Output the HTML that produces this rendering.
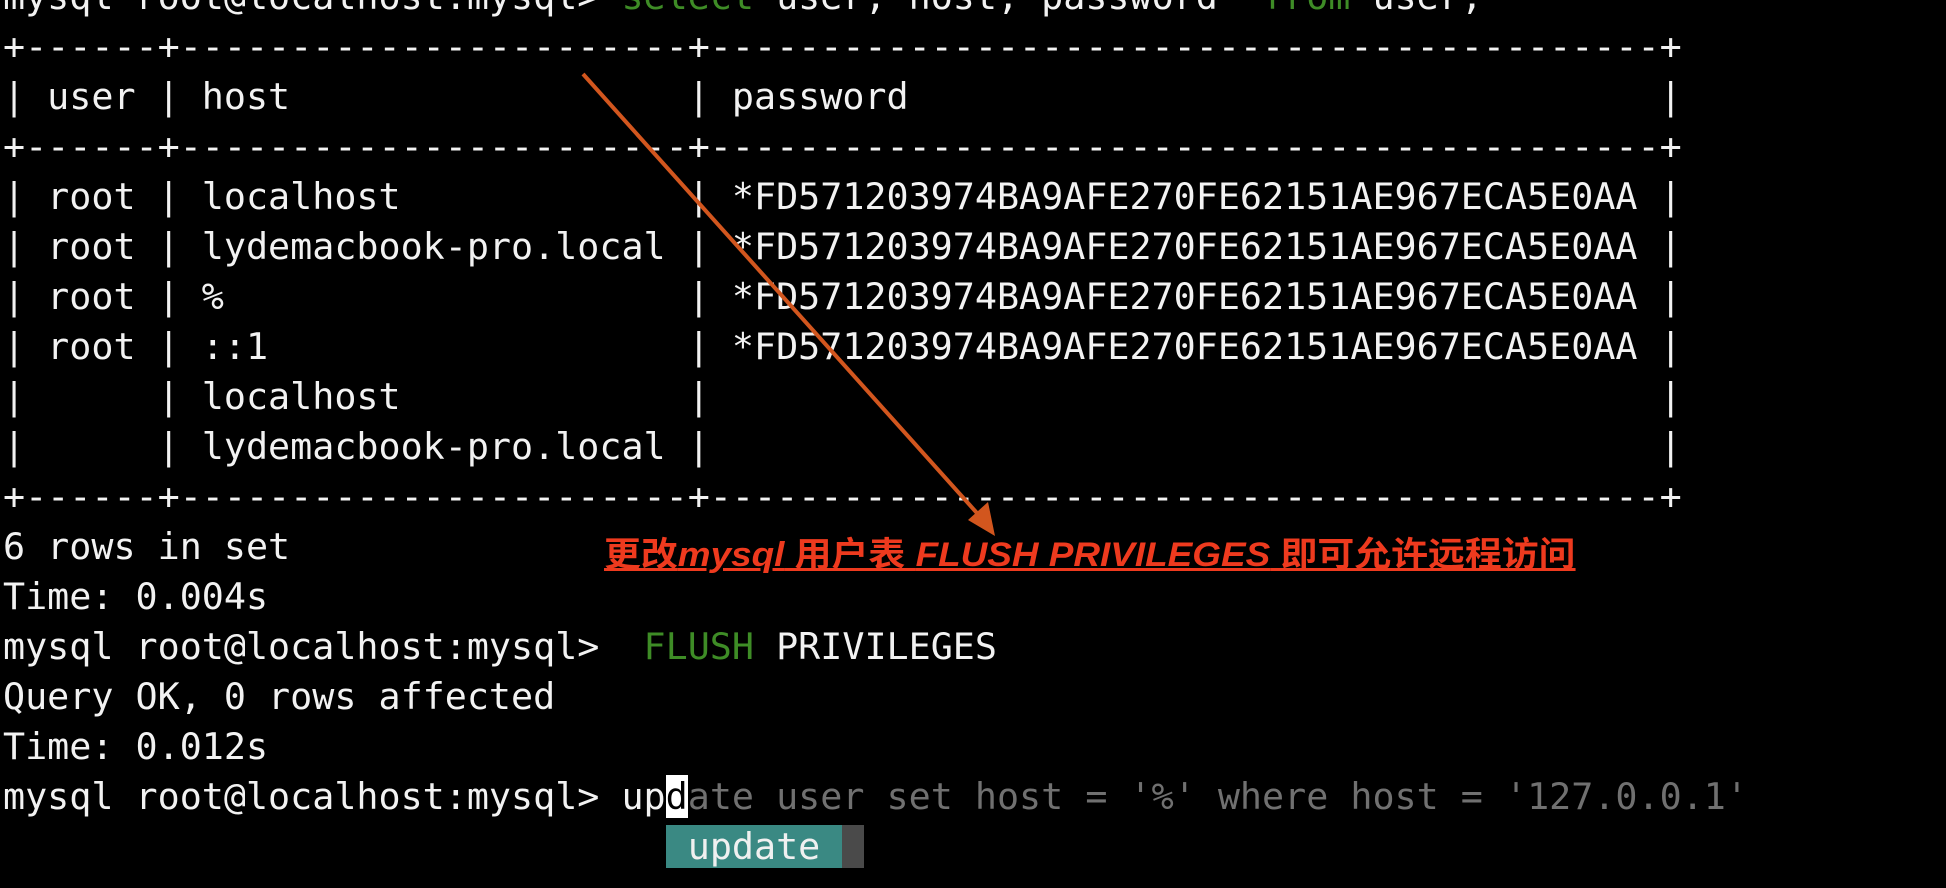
<!DOCTYPE html>
<html><head><meta charset="utf-8"><style>
html,body{margin:0;padding:0;background:#000;width:1946px;height:888px;overflow:hidden}
pre{position:absolute;left:3px;top:-28px;margin:0;font-family:"DejaVu Sans Mono","Liberation Mono",monospace;font-size:36.7px;line-height:50px;color:#f2f2f2;white-space:pre}
.g{color:#3e8c26}.s{color:#707070}
.cur{background:#fff;color:#000}
.pop{background:#3a8983;color:#f0f0f0}
.sb{background:#4a4a4a}
.ann{position:absolute;left:604px;top:527px;font-family:"Liberation Sans","Noto Sans CJK SC",sans-serif;font-weight:bold;font-size:34px;color:#ee3a1e;text-decoration:underline;text-decoration-thickness:3px;white-space:nowrap;transform:scaleX(1.085);transform-origin:0 0}
.ann i{font-style:italic}
</style></head><body>
<pre>mysql root@localhost:mysql> <span class="g">select</span> user, host, password  <span class="g">from</span> user;
+------+-----------------------+-------------------------------------------+
| user | host                  | password                                  |
+------+-----------------------+-------------------------------------------+
| root | localhost             | *FD571203974BA9AFE270FE62151AE967ECA5E0AA |
| root | lydemacbook-pro.local | *FD571203974BA9AFE270FE62151AE967ECA5E0AA |
| root | %                     | *FD571203974BA9AFE270FE62151AE967ECA5E0AA |
| root | ::1                   | *FD571203974BA9AFE270FE62151AE967ECA5E0AA |
|      | localhost             |                                           |
|      | lydemacbook-pro.local |                                           |
+------+-----------------------+-------------------------------------------+
6 rows in set
Time: 0.004s
mysql root@localhost:mysql>  <span class="g">FLUSH</span> PRIVILEGES
Query OK, 0 rows affected
Time: 0.012s
mysql root@localhost:mysql> up<span class="cur">d</span><span class="s">ate user set host = '%' where host = '127.0.0.1'</span>
                              <span class="pop"> update </span><span class="sb"> </span></pre>
<svg style="position:absolute;left:0;top:0" width="1946" height="888">
<line x1="583" y1="74" x2="985" y2="522" stroke="#d2561e" stroke-width="4"/>
<polygon points="995,536 968,520 988,502" fill="#d2561e"/>
</svg>
<div class="ann">更改<i>mysql</i> 用户表 <i>FLUSH PRIVILEGES</i> 即可允许远程访问</div>
</body></html>
